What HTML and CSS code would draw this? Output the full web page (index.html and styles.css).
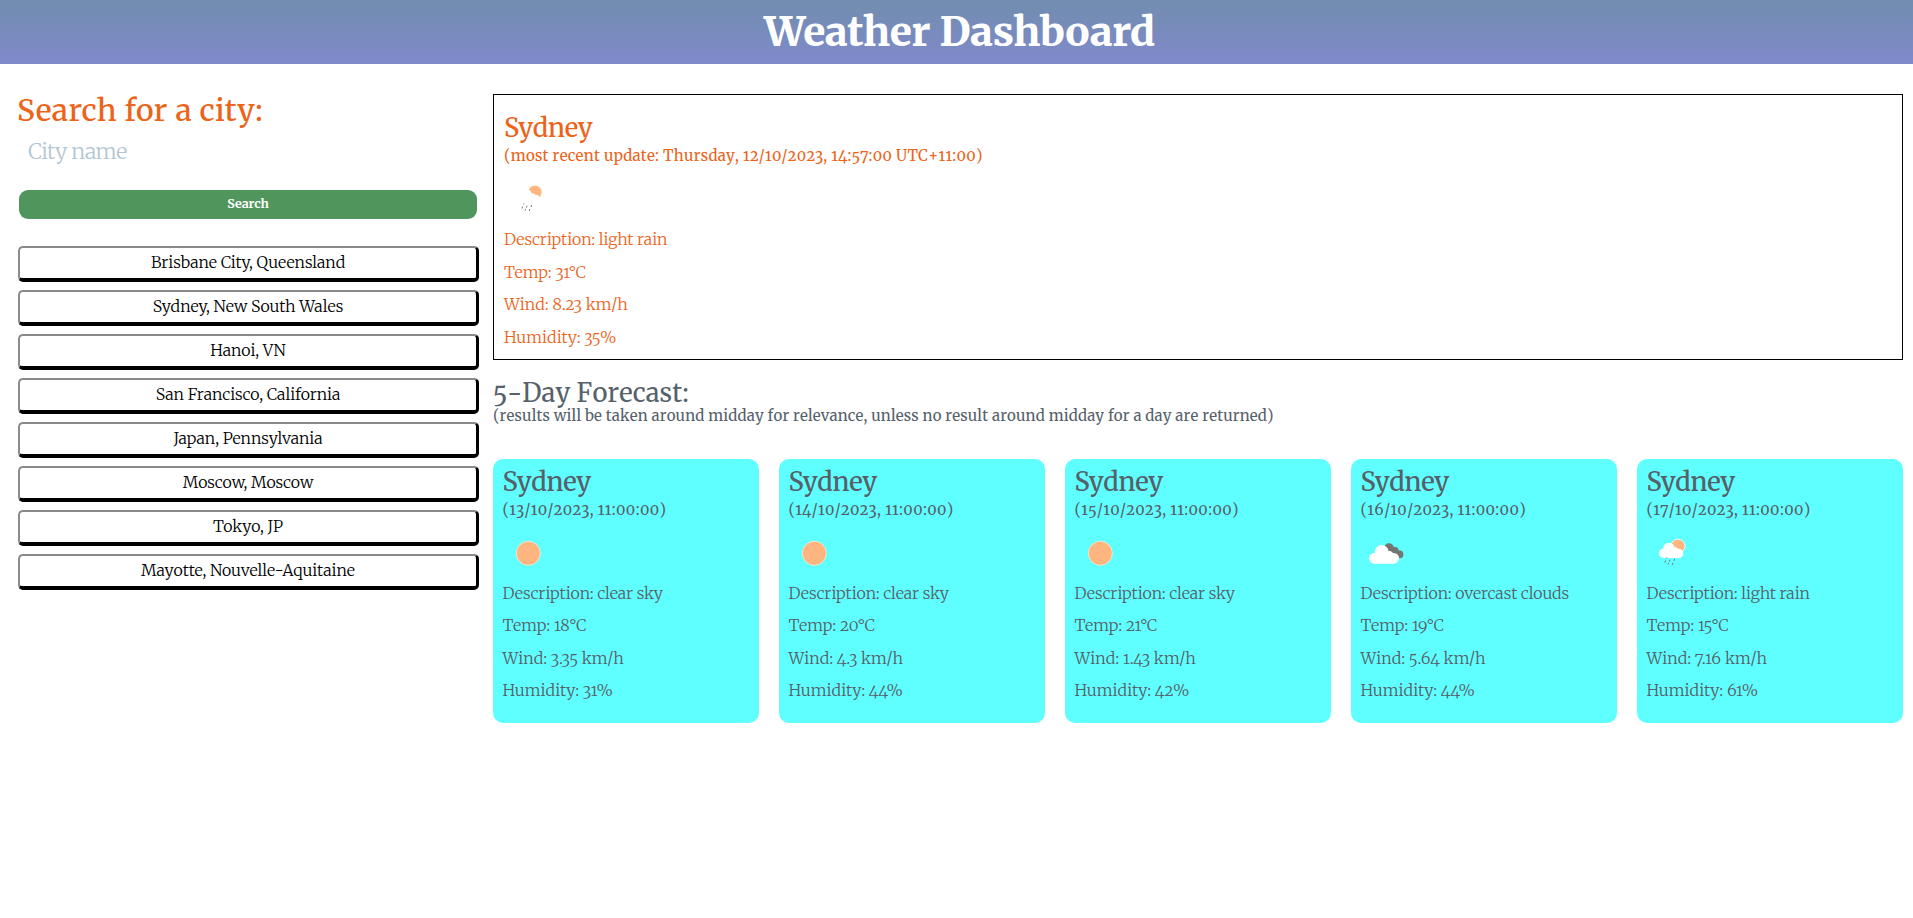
FILE: index.html
```
<!DOCTYPE html>
<html lang="en">
<head>
<meta charset="utf-8">
<title>Weather Dashboard</title>
<link rel="stylesheet" href="styles.css">
</head>
<body>
<svg class="defs" width="0" height="0" aria-hidden="true">
  <symbol id="sun" viewBox="0 0 50 50"><circle class="sun" cx="25.3" cy="25.3" r="12" stroke="#ffe9d0" stroke-width=".8"/></symbol>
  <symbol id="rain" viewBox="0 0 50 50">
    <circle class="sun" cx="31" cy="18.2" r="7" stroke="#fff" stroke-width=".8"/>
    <g class="cloud"><circle cx="22" cy="20.3" r="5.6"/><circle cx="16.7" cy="25.3" r="4.8"/><circle cx="28" cy="23" r="3.7"/><circle cx="31.6" cy="25.4" r="4.7"/><path d="M16.7 21h15v9.1h-15z"/></g>
    <path class="drops" d="M20 29.4l-.6 1M18.6 32.6l-.6 1.9M23 31.7l-.6 1.9M27.6 31l-.6 1.9M21.6 35l-.5 1.5M25.9 35l-.6 1.9"/>
  </symbol>
  <symbol id="clouds" viewBox="0 0 50 50">
    <g class="dark"><circle cx="28" cy="20.2" r="5"/><circle cx="34" cy="22.6" r="3.6"/><circle cx="38.6" cy="26.4" r="3.8"/><path d="M28 24l8-3 5 7-6 3z"/></g>
    <g class="cloud"><circle cx="20.7" cy="23.8" r="6.9"/><circle cx="13.4" cy="30.3" r="5.4"/><circle cx="28.3" cy="27.5" r="4.4"/><circle cx="32.7" cy="30.3" r="5.4"/><path d="M13.4 25h14v4h5.3v6.7H13.4z"/></g>
  </symbol>
</svg>
<header class="header"><h1>Weather Dashboard</h1></header>
<main class="layout">
  <aside class="sidebar">
    <h2>Search for a city:</h2>
    <input class="field" type="text" placeholder="City name" aria-label="City name">
    <button class="search">Search</button>
    <div class="history">
      <button>Brisbane City, Queensland</button>
      <button>Sydney, New South Wales</button>
      <button>Hanoi, VN</button>
      <button>San Francisco, California</button>
      <button>Japan, Pennsylvania</button>
      <button>Moscow, Moscow</button>
      <button>Tokyo, JP</button>
      <button>Mayotte, Nouvelle-Aquitaine</button>
    </div>
  </aside>
  <section class="content">
    <article class="report current">
      <h3>Sydney</h3>
      <h4>(most recent update: Thursday, 12/10/2023, 14:57:00 UTC+11:00)</h4>
      <svg class="icon"><use href="#rain"/></svg>
      <p>Description: light rain</p>
      <p>Temp: 31°C</p>
      <p>Wind: 8.23 km/h</p>
      <p>Humidity: 35%</p>
    </article>
    <div class="forecast-title">
      <h3>5-Day Forecast:</h3>
      <h4>(results will be taken around midday for relevance, unless no result around midday for a day are returned)</h4>
    </div>
    <div class="cards">
      <article class="report card">
        <h3>Sydney</h3><h4>(13/10/2023, 11:00:00)</h4>
        <svg class="icon"><use href="#sun"/></svg>
        <p>Description: clear sky</p><p>Temp: 18°C</p><p>Wind: 3.35 km/h</p><p>Humidity: 31%</p>
      </article>
      <article class="report card">
        <h3>Sydney</h3><h4>(14/10/2023, 11:00:00)</h4>
        <svg class="icon"><use href="#sun"/></svg>
        <p>Description: clear sky</p><p>Temp: 20°C</p><p>Wind: 4.3 km/h</p><p>Humidity: 44%</p>
      </article>
      <article class="report card">
        <h3>Sydney</h3><h4>(15/10/2023, 11:00:00)</h4>
        <svg class="icon"><use href="#sun"/></svg>
        <p>Description: clear sky</p><p>Temp: 21°C</p><p>Wind: 1.43 km/h</p><p>Humidity: 42%</p>
      </article>
      <article class="report card">
        <h3>Sydney</h3><h4>(16/10/2023, 11:00:00)</h4>
        <svg class="icon"><use href="#clouds"/></svg>
        <p>Description: overcast clouds</p><p>Temp: 19°C</p><p>Wind: 5.64 km/h</p><p>Humidity: 44%</p>
      </article>
      <article class="report card">
        <h3>Sydney</h3><h4>(17/10/2023, 11:00:00)</h4>
        <svg class="icon"><use href="#rain"/></svg>
        <p>Description: light rain</p><p>Temp: 15°C</p><p>Wind: 7.16 km/h</p><p>Humidity: 61%</p>
      </article>
    </div>
  </section>
</main>
</body>
</html>
```
FILE: styles.css
```
* { box-sizing: border-box; }
body {
  margin: 0;
  background: #fff;
  font-family: Merriweather, "DejaVu Serif Condensed", "DejaVu Serif", serif;
  font-size: 16px;
  font-weight: 300;
  font-variant-numeric: oldstyle-nums;
}
h1, h2, h3, h4, p { margin: 0; }
.defs { display: block; }
.sun { fill: #ffb580; }
.cloud { fill: #fff; }
.dark { fill: #757575; }
.drops { stroke: #757575; stroke-width: 1; fill: none; }

.header { height: 64px; padding-left: 6px; background: linear-gradient(#718dae, #808acc); text-align: center; }
h1 { color: #fff; font-size: 40.5px; font-weight: 800; line-height: 63px; letter-spacing: -.32px; }

.layout { display: flex; gap: 14px; padding: 26px 10px 0 18px; }
.sidebar { flex: 0 0 461px; }
.sidebar h2 { margin-left: -1px; color: #eb641a; font-size: 30px; font-weight: 500; line-height: 40px; letter-spacing: .42px; }
.field {
  display: block; width: 100%; height: 44px; margin-bottom: 16px; padding: 0 10px;
  border: 0; outline: 0; background: none;
  font: 300 21.5px/44px Merriweather, "DejaVu Serif Condensed", serif; letter-spacing: -.5px;
}
.field::placeholder { color: #b4c6d3; opacity: 1; }
.search {
  display: block; width: 458px; height: 29px; margin: 0 0 27px 1px; padding: 0 0 2px;
  border: 0; border-radius: 9px; background: #50965c; color: #fff;
  font: 700 12.5px/27px Merriweather, "DejaVu Serif Condensed", serif;
}
.history { display: grid; gap: 8px; }
.history button {
  height: 36px; padding: 0 0 2px; background: #fff; color: #000;
  border: 2px solid #8b8b8b; border-right: 3px solid #000; border-bottom: 4px solid #000; border-radius: 5px;
  font: 300 16px/28px Merriweather, "DejaVu Serif Condensed", serif; letter-spacing: -.07px;
}

.content { flex: 1; padding-top: 4px; }
.report { padding: 0 10px; }
.report h3, .forecast-title h3 { font-size: 25.6px; font-weight: 500; line-height: 30px; letter-spacing: -.3px; }
.report h4, .forecast-title h4 { font-size: 15px; font-weight: 400; line-height: 20px; letter-spacing: .17px; font-kerning: none; white-space: nowrap; }
.report p { line-height: 20px; margin-bottom: 12.67px; letter-spacing: .05px; white-space: nowrap; }
.report .icon + p { letter-spacing: -.1px; }
.icon { display: block; width: 50px; height: 50px; margin: 8px 0 5px; }
.current { height: 266px; border: 1px solid #000; color: #eb641a; padding: 18px 10px 0; }
.current h3, .card h3 { margin-bottom: 3px; }
.current h4 { letter-spacing: .29px; }
.forecast-title { height: 99px; padding-top: 18px; color: #56616b; }
.forecast-title h3 { font-weight: 400; font-kerning: none; letter-spacing: .12px; }
.forecast-title h4 { line-height: 16px; }
.cards { display: grid; grid-template-columns: repeat(5, 1fr); gap: 20px; }
.card { height: 264px; padding: 7.5px 9.5px 0; border-radius: 10px; background: #60ffff; color: #566068; }
.card h4 { letter-spacing: .38px; }
```
